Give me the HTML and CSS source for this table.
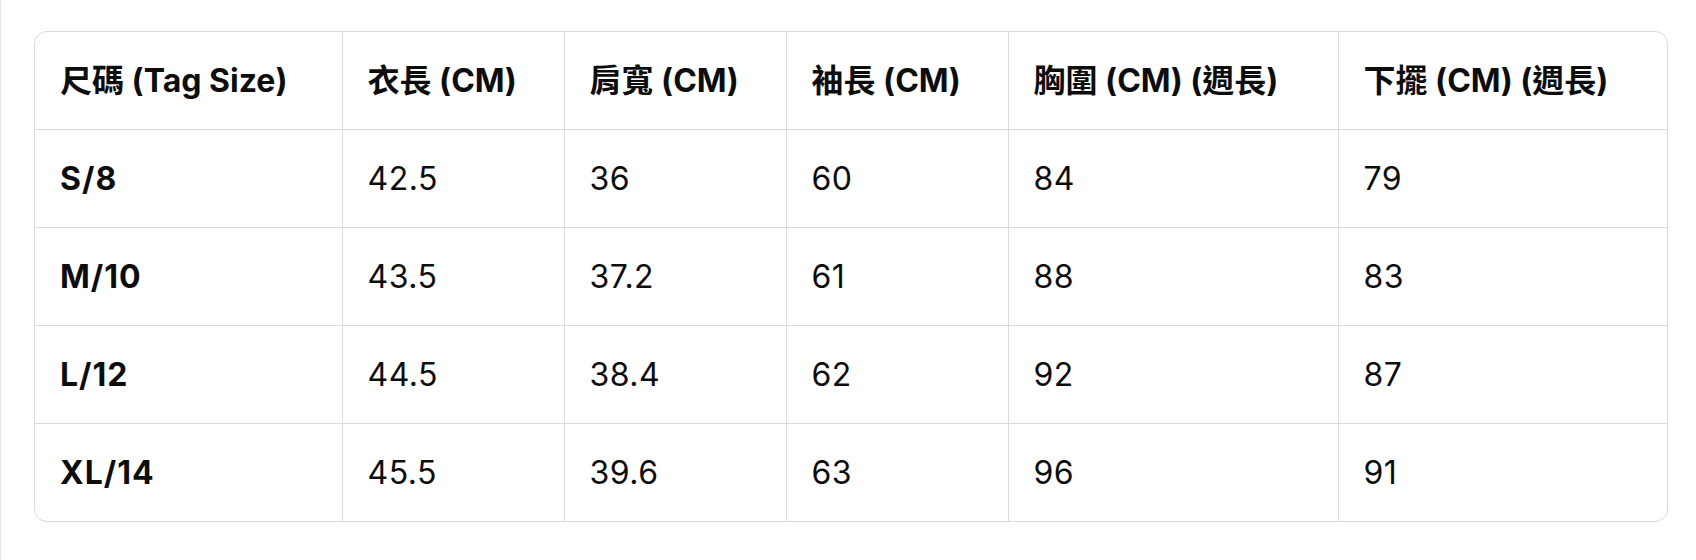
FILE: index.html
```html
<!DOCTYPE html>
<html lang="zh-Hant">
<head>
<meta charset="utf-8">
<title>尺碼表</title>
<link rel="stylesheet" href="styles.css">
</head>
<body>
<div class="page">
  <div class="table-wrap">
    <table class="size-table">
      <colgroup>
        <col class="c-size">
        <col class="c-mid">
        <col class="c-mid">
        <col class="c-mid">
        <col class="c-wide">
        <col class="c-wide">
      </colgroup>
      <thead>
        <tr>
          <th>尺碼 (Tag Size)</th>
          <th>衣長 (CM)</th>
          <th>肩寬 (CM)</th>
          <th>袖長 (CM)</th>
          <th>胸圍 (CM) (週長)</th>
          <th>下擺 (CM) (週長)</th>
        </tr>
      </thead>
      <tbody>
        <tr><td class="size">S/8</td><td>42.5</td><td>36</td><td>60</td><td>84</td><td>79</td></tr>
        <tr><td class="size">M/10</td><td>43.5</td><td>37.2</td><td>61</td><td>88</td><td>83</td></tr>
        <tr><td class="size">L/12</td><td>44.5</td><td>38.4</td><td>62</td><td>92</td><td>87</td></tr>
        <tr><td class="size">XL/14</td><td>45.5</td><td>39.6</td><td>63</td><td>96</td><td>91</td></tr>
      </tbody>
    </table>
  </div>
</div>
</body>
</html>
```

FILE: styles.css
```css
html, body {
  margin: 0;
  padding: 0;
  background: #ffffff;
}

body {
  font-family: Inter, "Noto Sans CJK TC", "Noto Sans", sans-serif;
  color: #0d0d0d;
}

.page {
  border-left: 1px solid #e6e6e9;
  min-height: 560px;
  box-sizing: border-box;
  padding: 31px 0 0 33px;
}

.table-wrap {
  width: 1634px;
  border: 1px solid #dadae0;
  border-radius: 13px;
  overflow: hidden;
  box-sizing: border-box;
}

.size-table {
  width: 100%;
  border-collapse: collapse;
  table-layout: fixed;
}

.c-size { width: 307px; }
.c-mid { width: 222px; }
.c-wide { width: 330px; }

.size-table th,
.size-table td {
  text-align: left;
  padding: 24px 25px;
  line-height: 49px;
  font-size: 32px;
  border-left: 1px solid #dadae0;
  border-top: 1px solid #dadae0;
  white-space: nowrap;
}

.size-table th {
  font-weight: 700;
  border-top: none;
}

.size-table td {
  font-weight: 400;
  letter-spacing: 0.5px;
}

.size-table td.size {
  font-weight: 700;
  letter-spacing: 1px;
}

.size-table tr > :first-child {
  border-left: none;
}
```
